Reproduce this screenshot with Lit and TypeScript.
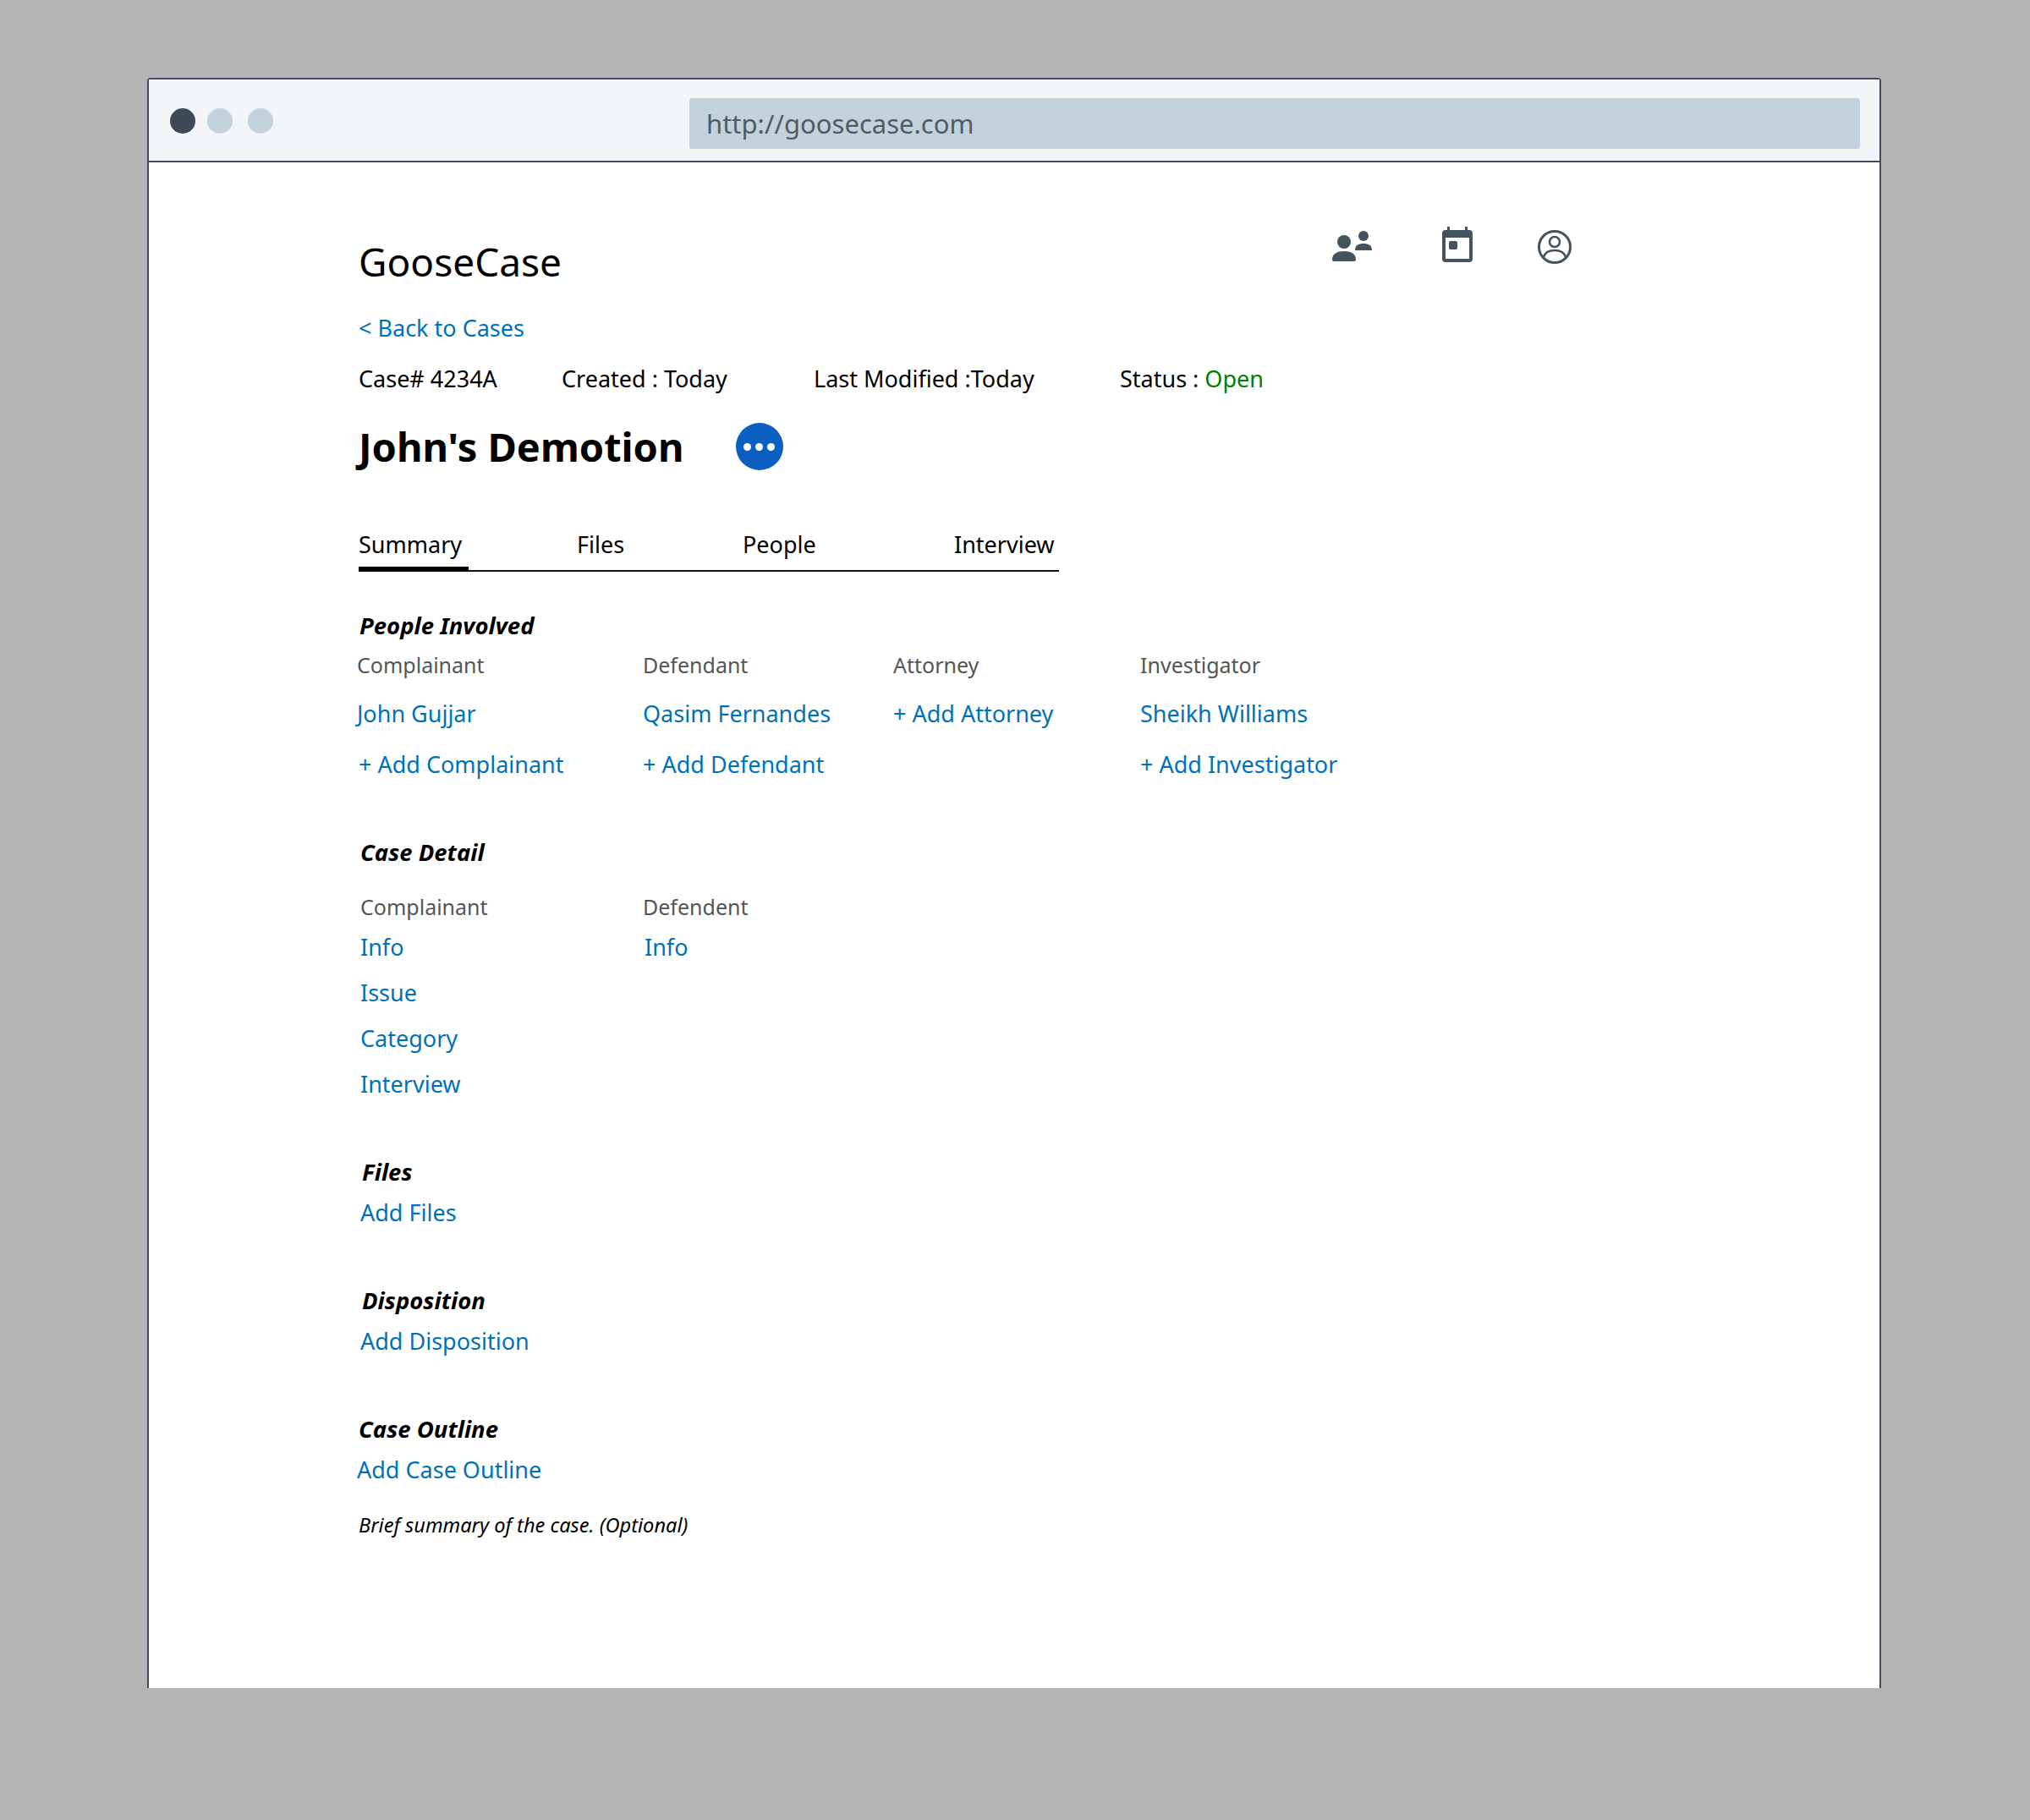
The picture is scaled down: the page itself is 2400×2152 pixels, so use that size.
import { LitElement, html, css } from 'lit';
import { customElement } from 'lit/decorators.js';

const peopleCols = [
  { label: 'Complainant', name: 'John Gujjar', add: '+ Add Complainant' },
  { label: 'Defendant', name: 'Qasim Fernandes', add: '+ Add Defendant' },
  { label: 'Attorney', name: '+ Add Attorney', add: '' },
  { label: 'Investigator', name: 'Sheikh Williams', add: '+ Add Investigator' },
];

@customElement('app-root')
export class AppRoot extends LitElement {
  static styles = css`
    :host {
      display: block;
      height: 2152px;
      background: #b4b4b4;
      font-family: 'Noto Sans', sans-serif;
      color: #000;
      overflow: hidden;
    }

    .window {
      margin: 92px 0 0 174px;
      width: 2050px;
      height: 1904px;
      box-sizing: border-box;
      background: #fff;
      border: 2px solid #434c5c;
      border-bottom: none;
      border-radius: 4px 4px 0 0;
    }

    .chrome {
      height: 98px;
      box-sizing: border-box;
      background: #f3f6f8;
      border-bottom: 2px solid #434c5c;
      display: flex;
      align-items: center;
      padding: 0 23px 0 25px;
    }

    .dot {
      width: 30px;
      height: 30px;
      border-radius: 50%;
      background: #c3d2da;
      margin: 1px 14px 0 0;
    }

    .dot.dark {
      background: #3f4a59;
    }

    .dot + .dot + .dot {
      margin-left: 4px;
    }

    .url {
      margin: 8px 0 0 auto;
      width: 1384px;
      height: 60px;
      box-sizing: border-box;
      background: #c3d2da;
      border-radius: 3px;
      padding: 0 20px;
      font-size: 31px;
      line-height: 60px;
      color: #4d5c68;
    }

    .content {
      padding: 87px 0 0 248px;
      width: 1435px;
    }

    .header {
      display: flex;
      justify-content: space-between;
      height: 60px;
    }

    .logo {
      font-size: 46px;
      line-height: 60px;
    }

    .icons {
      display: flex;
      align-items: flex-start;
      margin-top: -12px;
    }

    .icons svg {
      display: block;
      fill: #44545f;
    }

    .icons .cal {
      margin: 1px 0 0 80px;
    }

    .icons .acc {
      margin: 2px 0 0 76px;
    }

    .row {
      line-height: 40px;
      white-space: nowrap;
    }

    a {
      color: #0071b8;
      text-decoration: none;
    }

    .back {
      font-size: 27px;
      margin-top: 29px;
    }

    .meta {
      display: flex;
      font-size: 27px;
      margin-top: 20px;
    }

    .meta span:nth-child(1) {
      width: 240px;
    }

    .meta span:nth-child(2) {
      width: 298px;
    }

    .meta span:nth-child(3) {
      width: 362px;
    }

    .open {
      color: #008000;
    }

    .title {
      display: flex;
      align-items: center;
      height: 60px;
      margin-top: 30px;
      font-size: 47px;
      font-weight: 700;
    }

    .more {
      width: 56px;
      height: 56px;
      margin-left: 61px;
      border-radius: 50%;
      background: #0a5fc0;
      display: flex;
      align-items: center;
      justify-content: center;
      gap: 5px;
    }

    .more i {
      width: 9px;
      height: 9px;
      border-radius: 50%;
      background: #fff;
    }

    .tabs {
      display: flex;
      width: 828px;
      margin-top: 66px;
      border-bottom: 2px solid #111;
      font-size: 27px;
      line-height: 40px;
      padding-bottom: 10px;
      position: relative;
    }

    .tab:nth-child(1) {
      width: 258px;
    }

    .tab:nth-child(2) {
      width: 196px;
    }

    .tab:nth-child(3) {
      width: 250px;
    }

    .tabs .bar {
      position: absolute;
      left: 0;
      bottom: -2px;
      width: 130px;
      height: 6px;
      background: #000;
    }

    h2 {
      margin: 0;
      font-size: 27.5px;
      line-height: 40px;
      font-weight: 700;
      font-style: italic;
    }

    .label {
      font-size: 25px;
      line-height: 40px;
      color: #555;
    }

    .link {
      display: block;
      font-size: 27px;
      line-height: 40px;
    }

    .people-head {
      margin: 44px 0 0 1px;
    }

    .people {
      display: grid;
      grid-template-columns: 338px 296px 292px auto;
      margin: 6px 0 0 -2px;
    }

    .people .link:nth-child(2) {
      margin-top: 18px;
    }

    .people .link:nth-child(3) {
      margin-top: 20px;
    }

    .people .first .link:nth-child(3) {
      margin-left: 2px;
    }

    .section {
      margin-top: 64px;
    }

    .detail {
      display: grid;
      grid-template-columns: 334px auto;
      margin: 24px 0 0 2px;
    }

    .detail .link {
      margin-top: 14px;
    }

    .detail .link:nth-child(2) {
      margin-top: 8px;
    }

    .detail .col2 .link {
      margin-left: 2px;
    }

    .block .link {
      margin-top: 8px;
    }

    .shift {
      padding-left: 2px;
    }

    .brief {
      margin-top: 25px;
      font-size: 23.6px;
      line-height: 40px;
      font-style: italic;
    }
  `;

  render() {
    return html`
      <div class="window">
        <div class="chrome">
          <div class="dot dark"></div>
          <div class="dot"></div>
          <div class="dot"></div>
          <div class="url">http://goosecase.com</div>
        </div>
        <div class="content">
          <div class="header">
            <div class="logo">GooseCase</div>
            <div class="icons">
              <svg width="50" height="44" viewBox="0 0 50 44">
                <circle cx="14" cy="19" r="8" />
                <path d="M0 40c0-7 6-10 14-10s14 3 14 10c0 1-1 2-2 2H2c-1 0-2-1-2-2z" />
                <circle cx="37" cy="12" r="6" />
                <path d="M27 29c0-6 4-8 10-8s10 2 10 8z" />
              </svg>
              <svg class="cal" width="36" height="42" viewBox="0 0 36 42">
                <path fill-rule="evenodd" d="M6 0h3v4h18V0h3v4h2a4 4 0 0 1 4 4v30a4 4 0 0 1-4 4H4a4 4 0 0 1-4-4V8a4 4 0 0 1 4-4h2zM4 13v25h28V13z" />
                <rect x="8" y="17" width="10" height="10" rx="2" />
              </svg>
              <svg class="acc" width="42" height="44" viewBox="0 0 42 44">
                <g fill="none" stroke="#44545f">
                  <circle cx="21" cy="23" r="18.5" stroke-width="3" />
                  <circle cx="21" cy="17" r="6" stroke-width="2.5" />
                  <path d="M8 35c2-7 8-8 13-8s11 1 13 8" stroke-width="2.5" />
                </g>
              </svg>
            </div>
          </div>

          <div class="row back"><a href="#">&lt; Back to Cases</a></div>

          <div class="row meta">
            <span>Case# 4234A</span>
            <span>Created : Today</span>
            <span>Last Modified :Today</span>
            <span>Status : <span class="open">Open</span></span>
          </div>

          <div class="title">
            John's Demotion
            <div class="more"><i></i><i></i><i></i></div>
          </div>

          <div class="tabs">
            <div class="tab">Summary</div>
            <div class="tab">Files</div>
            <div class="tab">People</div>
            <div class="tab">Interview</div>
            <div class="bar"></div>
          </div>

          <h2 class="people-head">People Involved</h2>
          <div class="people">
            ${peopleCols.map(
              (c, i) => html`
                <div class=${i === 0 ? 'first' : ''}>
                  <div class="label">${c.label}</div>
                  <a class="link" href="#">${c.name}</a>
                  ${c.add ? html`<a class="link" href="#">${c.add}</a>` : ''}
                </div>
              `
            )}
          </div>

          <h2 class="section shift">Case Detail</h2>
          <div class="detail">
            <div>
              <div class="label">Complainant</div>
              <a class="link" href="#">Info</a>
              <a class="link" href="#">Issue</a>
              <a class="link" href="#">Category</a>
              <a class="link" href="#">Interview</a>
            </div>
            <div class="col2">
              <div class="label">Defendent</div>
              <a class="link" href="#">Info</a>
            </div>
          </div>

          <div class="section block shift">
            <h2 class="shift">Files</h2>
            <a class="link" href="#">Add Files</a>
          </div>

          <div class="section block shift">
            <h2 class="shift">Disposition</h2>
            <a class="link" href="#">Add Disposition</a>
          </div>

          <div class="section block">
            <h2>Case Outline</h2>
            <a class="link" href="#" style="margin-left:-2px">Add Case Outline</a>
          </div>

          <div class="brief">Brief summary of the case. (Optional)</div>
        </div>
      </div>
    `;
  }
}
